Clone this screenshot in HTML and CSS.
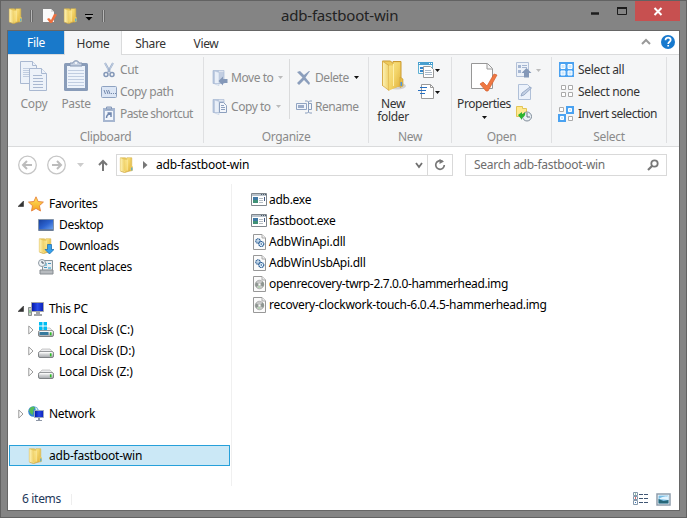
FILE: index.html
```html
<!DOCTYPE html>
<html lang="en">
<head>
<meta charset="utf-8">
<title>adb-fastboot-win</title>
<link rel="stylesheet" href="styles.css">
</head>
<body>
<svg class="defs" width="0" height="0">
  <defs>
    <linearGradient id="gold" x1="0" y1="0" x2="1" y2="1"><stop offset="0" stop-color="#f9e48c"/><stop offset=".5" stop-color="#f3d468"/><stop offset="1" stop-color="#dfb03c"/></linearGradient>
    <linearGradient id="pale" x1="0" x2="1"><stop offset="0" stop-color="#fdf3b8"/><stop offset="1" stop-color="#efd067"/></linearGradient>
    <linearGradient id="blue" x1="0" y1="0" x2="1" y2="1"><stop offset="0" stop-color="#173e9b"/><stop offset=".5" stop-color="#2c63cf"/><stop offset="1" stop-color="#75aaf1"/></linearGradient>
    <linearGradient id="metal" x1="0" y1="0" x2="0" y2="1"><stop offset="0" stop-color="#f6f6f6"/><stop offset="1" stop-color="#a5a8ac"/></linearGradient>
    <linearGradient id="starfill" x1="0" y1="0" x2="0" y2="1"><stop offset="0" stop-color="#ffe65e"/><stop offset="1" stop-color="#f5a01f"/></linearGradient>
    <linearGradient id="screen" x1="0" x2="1"><stop offset="0" stop-color="#0013a3"/><stop offset=".5" stop-color="#2849e8"/><stop offset="1" stop-color="#0a20b8"/></linearGradient>
    <symbol id="folder" viewBox="0 0 16 16">
      <path d="M1.300.800h5l1.500 1.300V.8h5v13H1.300z" fill="#e8c75d" stroke="#d9b44c" stroke-width=".6"/>
      <path d="M1.500 1l4 1.800v12.900l-4-1.500z" fill="url(#pale)"/>
      <path d="M5.500 2.800h2.700V1h3.300v12.500l-6 2.200z" fill="url(#gold)"/>
      <path d="M8.200 2.500v11" stroke="#fff2b0" stroke-width=".7"/>
      <path d="M11.500 8.500l2.300 1v4l-2.300.8z" fill="#edca5b"/>
      <path d="M12.800 10.500v3" stroke="#49a6dd" stroke-width="1.200"/><path d="M1.500 14.200l4 1.400 6-1.900" fill="none" stroke="#c79d3b" stroke-width=".6"/>
    </symbol>
    <symbol id="folder-muted" viewBox="0 0 16 16">
      <path d="M1 .5h6v14l-6-1z" fill="#b4c3dc"/><path d="M6 1.500h6v12H6z" fill="#c2cee2"/><path d="M2.500 1L7 2.500v13L2.500 14z" fill="#e9eff8" stroke="#b2c1d9" stroke-width=".5"/>
      <path d="M1 .5h11v13H1z" fill="none" stroke="#a8b9d4" stroke-width=".7"/>
    </symbol>
    <symbol id="drive" viewBox="0 0 16 16">
      <path d="M.8 9.500l3.200-3.500h8l3.200 3.500z" fill="#ececee" stroke="#aaa" stroke-width=".6"/>
      <rect x=".5" y="8.700" width="15" height="5.800" rx="1.500" fill="url(#metal)" stroke="#75787c" stroke-width=".9"/><path d="M1.500 9.700h13" stroke="#fff"/><path d="M12.700 10.300v3" stroke="#2dbe25" stroke-width="1.600"/>
    </symbol>
    <symbol id="exe" viewBox="0 0 16 13">
      <path d="M.5.500h15v12H.5z" fill="#fff" stroke="#7f868c"/><path d="M1 2h14" stroke="#b9c2ca" stroke-width="2"/><path d="M10 1.500h1m1 0h1m1 0h1" stroke="#495969"/>
      <path d="M2 4h5v6H2z" fill="#3f78a4"/><path d="M2 7h5v3H2z" fill="#409177"/><path d="M8 5.500h4m-4 2h4m-4 2h4" stroke="#b5bdc4"/><path d="M13.500 4v4" stroke="#465a82"/>
    </symbol>
    <symbol id="file" viewBox="0 0 13 16"><path d="M.5.500h8.500l3.500 3.500v11.500H.5z" fill="#fbfbfb" stroke="#989898"/><path d="M9 .5V4h3.500" fill="#eee" stroke="#aaa"/></symbol>
    <symbol id="dll" viewBox="0 0 13 16"><use href="#file" width="13" height="16"/><g fill="#eaf6ff" stroke="#285b91" stroke-width="1.200"><circle cx="5" cy="7" r="2.200" stroke-dasharray="1.300 .4"/><circle cx="8.300" cy="10" r="2.500" stroke-dasharray="1.400 .4"/></g><circle cx="5" cy="7" r=".6" fill="#285b91"/><circle cx="8.300" cy="10" r=".8" fill="#285b91"/></symbol>
    <symbol id="img" viewBox="0 0 13 16"><use href="#file" width="13" height="16"/><circle cx="6.500" cy="8.500" r="4.300" fill="#c8c9c9" stroke="#999" stroke-width=".6"/><path d="M6.500 8.500L3 6.300A4 4 0 0 0 3.200 11zM6.500 8.500l3.200-3A4 4 0 0 1 10 10.800z" fill="#8d9590"/><path d="M6.500 8.500l-2 3.300h3z" fill="#b1d5ae"/><circle cx="6.500" cy="8.500" r="1.300" fill="#fff" stroke="#aaa" stroke-width=".5"/></symbol>
    <symbol id="closed" viewBox="0 0 6 10"><path d="M.8 1l4.200 4-4.200 4z" fill="#fff" stroke="#999"/></symbol>
    <symbol id="opened" viewBox="0 0 6 6"><path d="M5.500 0v5.500H0z" fill="#333" stroke="#222" stroke-width=".5"/></symbol>
    <symbol id="down" viewBox="0 0 5 3"><path d="M0 0h5L2.500 3z" fill="currentColor"/></symbol>
    <symbol id="doc-check" viewBox="0 0 28 31"><path d="M1.500 1.500h16l5 5v20h-21z" fill="#fff" stroke="#979797"/><path d="M17 2v5h5" fill="#f4f4f4" stroke="#999"/><path d="M10 22l3-2 4 4 7-12 3 1-9 16h-2z" fill="#ef7843" stroke="#d65e2c" stroke-width=".7"/></symbol>
  </defs>
</svg>
<div class="window">
  <header class="titlebar">
    <div class="quick">
      <svg class="i16"><use href="#folder"/></svg><i class="qsep"></i>
      <svg class="qcheck" width="16" height="16" viewBox="0 0 16 16"><path d="M1 1h8l3 3v10H1z" fill="#fafafa"/><path d="M9 1v3h3" fill="#ddd"/><path d="M5 11l2-1 2 2 3-6 3 .5L10 15H8z" fill="#ed7040"/></svg>
      <svg class="i16"><use href="#folder"/></svg>
      <svg class="qmore" width="8" height="7"><path d="M0 .5h8" stroke="#000"/><path d="M.5 3h7L4 6.500z"/><path d="M1 2h7" stroke="#ccc" stroke-width=".6"/></svg><i class="qsep"></i>
    </div>
    <h1>adb-fastboot-win</h1>
    <div class="controls">
      <svg class="wbtn" width="60" height="20"><path d="M16 12.500h8" stroke="#1c1c1c" stroke-width="2.500"/><path d="M42.500 6.500h9v7h-9z" fill="none" stroke="#1c1c1c"/><path d="M42 7h10" stroke="#1c1c1c" stroke-width="2"/></svg>
      <svg class="close" width="45" height="20"><path d="M19.500 7l7 7m0-7l-7 7" stroke="#fff" stroke-width="2"/></svg>
    </div>
  </header>
  <main class="client">
    <nav class="tabs">
      <span class="tab file">File</span><span class="tab home">Home</span><span class="tab share">Share</span><span class="tab view">View</span>
      <svg class="tabtools" width="37" height="23"><path d="M4 13l4-4 4 4" fill="none" stroke="#999" stroke-width="2"/><circle cx="30" cy="11" r="7" fill="#1779ce"/><path d="M27.500 9.200c0-3.500 5.200-3.200 5.200-.2 0 1.700-2.500 1.900-2.500 4m0 1v1.600" fill="none" stroke="#fff" stroke-width="1.700"/></svg>
    </nav>
    <section class="ribbon">
      <div class="group clipboard">
        <div class="tools">
          <div class="big copy"><svg width="30" height="34" viewBox="0 0 30 34"><g stroke="#a9b8d1" fill="#edf2f9"><path d="M1.500 2.500h12l4 4v18h-16z"/><path d="M4 9.500h9m-9 2h9m-9 2h9m-9 2h9m-9 2h9" stroke="#c1cde0"/><path d="M13.500 2.500v4h4"/><path d="M10.500 9.500h12l5 5v17h-17z"/><path d="M22.500 9.500v5h5"/><path d="M14 16.500h9m-9 3h10m-10 3h10m-10 3h10m-10 3h10"/></g></svg><span>Copy</span></div>
          <div class="big paste"><svg width="26" height="34" viewBox="0 0 26 34"><rect x="1" y="4" width="24" height="28" rx="1.500" fill="#899cb9"/><path d="M4 7h18v22H4z" fill="#edf3fb"/><path d="M5 11.500h16m-16 3h16m-16 3h16m-16 3h16m-16 3h16m-16 3h16" stroke="#c0cde1"/><path d="M7 7V4h3c0-3 6-3 6 0h3v3z" fill="#c4cfe0" stroke="#8395b2"/><circle cx="13" cy="4" r="1" fill="#fff"/></svg><span>Paste</span></div>
          <div class="stack">
            <span class="cmd"><svg width="16" height="16"><path d="M4 1l5 9m3-9L7 10" stroke="#9eb0cc" stroke-width="2"/><path d="M4 1l3 6m5-6L9 7" stroke="#c2cfe2"/><g fill="none" stroke="#8498b8" stroke-width="1.500"><circle cx="5" cy="12.500" r="2"/><circle cx="11" cy="12.500" r="2"/></g></svg>Cut</span>
            <span class="cmd"><svg width="16" height="16"><rect x=".5" y="2.500" width="15" height="11" rx="1" fill="#dce6f5" stroke="#8ea2c1"/><path d="M3 6l1.500 4M5.500 6L7 10M7.500 6L9 10" stroke="#7287aa"/><path d="M10 9.500h1m1 0h1m1 0h1" stroke="#7287aa"/></svg>Copy path</span>
            <span class="cmd tight"><svg width="16" height="16"><rect x="2" y="2" width="12" height="14" fill="#a6b6d0"/><path d="M4 5h8v9H4z" fill="#f2f6fc"/><path d="M5.500 3V1h5v2z" fill="#cbd5e4" stroke="#8498b8"/><path d="M5.500 12c0-3 1-4 4-4m-3-1h3.500v4" fill="none" stroke="#7188ae" stroke-width="1.500"/></svg>Paste shortcut</span>
          </div>
        </div><div class="caption">Clipboard</div>
      </div>
      <div class="group organize">
        <div class="tools">
          <div class="stack">
            <span class="cmd"><svg width="16" height="16"><use href="#folder-muted"/><path d="M6.500 11l4.500-4.500V9h4.500v4H11v2.500z" fill="#8498b8"/></svg>Move to<svg class="drop"><use href="#down"/></svg></span>
            <span class="cmd"><svg width="16" height="16"><use href="#folder-muted"/><path d="M7.500 3.500h4l3 3v7h-7z" fill="#f3f6fb" stroke="#8da0be"/><path d="M9 6.500h3m-3 2h4m-4 2h4" stroke="#8da0be"/></svg>Copy to<svg class="drop"><use href="#down"/></svg></span>
          </div>
          <div class="stack second">
            <span class="cmd"><svg width="16" height="16"><path d="M1 2l3-1 4 4 5-4h1L9.500 7.500 14 13l-1 2-5-5-5 5-2-2 5.500-5.500z" fill="#8b9ebc"/></svg>Delete<svg class="drop dark"><use href="#down"/></svg></span>
            <span class="cmd"><svg width="16" height="16"><path d="M.5 4.500h10v6H.5z" fill="#f0f4fb" stroke="#91a4c2"/><path d="M2 6h6v3H2z" fill="#9bacc8"/><path d="M9 2h2.500l1 1 1-1H16M12.500 3v10M9 14h2.500l1-1 1 1H16M13 4.500h2.500v6H13" fill="none" stroke="#8a9ebd"/></svg>Rename</span>
          </div>
        </div><div class="caption">Organize</div>
      </div>
      <div class="group new">
        <div class="tools">
          <div class="big newfolder"><svg width="30" height="34" viewBox="0 0 30 34"><ellipse cx="19" cy="27" rx="9" ry="3.500" fill="#d2d2d2"/><path d="M4.500 2h8l2.500 2.500V2.500h8v24l-8 2-10.500-2z" fill="#edca5c" stroke="#cb9a31"/><path d="M4.500 2.300L11 6.500v25l-6.500-5z" fill="url(#pale)" stroke="#d2a23b" stroke-width=".7"/><path d="M11 6.500h4.500V3.500h6.500V27l-11 4.500z" fill="url(#gold)"/><path d="M15.500 5v22" stroke="#fff0a8"/><path d="M22 18l3 2v7l-3 1.500z" fill="#e6bd49" stroke="#cb9a31" stroke-width=".6"/><path d="M23.300 23v4" stroke="#4c95dd" stroke-width="1.600"/></svg><span>New</span><span>folder</span></div>
          <div class="stack">
            <span class="cmd"><svg width="17" height="18"><path d="M1.500 1.500h14v11h-14z" fill="#f2f9fd" stroke="#5db0d3"/><path d="M1 2.500h15" stroke="#489fcf" stroke-width="3"/><path d="M2 2.500h1m9 0h1m1 0h1" stroke="#fff"/><path d="M3 7h3m-3 3h3" stroke="#3486cc" stroke-width="2"/><path d="M6.500 5.500h7l3 3v8h-10z" fill="#fff" stroke="#999"/><path d="M8 9.500h6m-6 2h7m-7 2h7" stroke="#aab9c8"/></svg><svg class="drop dark"><use href="#down"/></svg></span>
            <span class="cmd"><svg width="17" height="18"><path d="M4.500 1.500h9l3 3v11h-12z" fill="#fff" stroke="#999"/><path d="M13.500 1.500v3h3" fill="none" stroke="#999"/><path d="M3 4.500h7m-9 3h8m-6 3h5" stroke="#276fc0"/></svg><svg class="drop dark"><use href="#down"/></svg></span>
          </div>
        </div><div class="caption">New</div>
      </div>
      <div class="group open">
        <div class="tools">
          <div class="big properties"><svg width="28" height="31"><use href="#doc-check"/></svg><span>Properties</span><svg class="drop dark"><use href="#down"/></svg></div>
          <div class="stack">
            <span class="cmd"><svg width="16" height="16"><path d="M.5.500h12v14H.5z" fill="#edf2f9" stroke="#b3c1d8"/><path d="M2 3h3v3H2zm0 5h3v3H2z" fill="#a5b6d2"/><path d="M6 3.500h5m-5 2h5" stroke="#a5b6d2"/><path d="M10.500 6l5 5H13v4.500H8V11H5.500z" fill="#8498b8"/></svg><svg class="drop"><use href="#down"/></svg></span>
            <span class="cmd"><svg width="16" height="16"><path d="M2.500.500h9l3 3v12h-12z" fill="#ecf2fb" stroke="#b0c0d8"/><path d="M5 12l1-3 8-6 1.500 1L8 11z" fill="#c2cfe3" stroke="#8ca0bf" stroke-width=".8"/></svg></span>
            <span class="cmd"><svg width="16" height="16"><path d="M.5.500h6v2h4v8H.5z" fill="#ffe98e" stroke="#e2c457"/><circle cx="11" cy="10.500" r="4.500" fill="#eaf0f6" stroke="#7e8a97"/><path d="M11 7v4h3" fill="none" stroke="#65717e"/><path d="M1 8l4-3v2c3-1 3-2 3-2 1 3-1 5-3 6v2z" fill="#2bb32f" transform="translate(1 1)"/></svg></span>
          </div>
        </div><div class="caption">Open</div>
      </div>
      <div class="group select">
        <div class="tools"><div class="stack">
          <span class="cmd"><svg width="16" height="16"><path d="M1 0h15v15H1z" fill="#4aa2f1"/><path d="M3 2.500h4v4H3zm7 0h4v4h-4zm-7 6.500h4v4H3zm7 0h4v4h-4z" fill="#cce9ff" stroke="#fff"/></svg>Select all</span>
          <span class="cmd"><svg width="16" height="16"><path d="M3.500 1.500h4v4h-4zm7 0h4v4h-4zm-7 7h4v4h-4zm7 0h4v4h-4z" fill="#fff" stroke="#aaa"/></svg>Select none</span>
          <span class="cmd tight"><svg width="16" height="16"><path d="M8 0h8v8H8zM0 8h8v8H0z" fill="#4aa2f1"/><path d="M10.500 2.500h3v3h-3zm-8 8h3v3h-3z" fill="#cce9ff" stroke="#fff"/><path d="M1.500 1.500h4v4h-4zm9 9h4v4h-4z" fill="#fff" stroke="#aaa"/></svg>Invert selection</span>
        </div></div><div class="caption">Select</div>
      </div>
    </section>
    <section class="address">
      <svg class="arrows" width="96" height="22"><g fill="#fff" stroke="#c6c6c6" stroke-width="1.300"><circle cx="9.500" cy="11" r="8.800"/><circle cx="38.500" cy="11" r="8.800"/></g><path d="M14 11H5m4-4l-4 4 4 4M34 11h9m-4-4l4 4-4 4" fill="none" stroke="#bcbcbc" stroke-width="2"/><path d="M59 9h7l-3.500 4z" fill="#ccc"/><path d="M85 17V7m-4 4l4-4 4 4" fill="none" stroke="#777" stroke-width="2"/></svg>
      <div class="path"><svg class="i16"><use href="#folder"/></svg><svg class="crumb" width="5" height="8"><path d="M0 0l4.500 4L0 8z" fill="#777"/></svg><span class="wide">adb-fastboot-win</span><svg class="chev" width="8" height="7"><path d="M1 1l3 4 3-4" fill="none" stroke="#707070" stroke-width="1.800"/></svg><div class="refresh"><svg width="12" height="12"><path d="M8.500 2.500A4.300 4.300 0 1 0 10.300 6" fill="none" stroke="#777" stroke-width="1.700"/><path d="M5.500 0v5L10 2.500z" fill="#777"/></svg></div></div>
      <div class="search"><span>Search adb-fastboot-win</span><svg width="12" height="12"><circle cx="7.500" cy="4.500" r="3.200" fill="none" stroke="#777" stroke-width="1.800"/><path d="M5 7l-4 4" stroke="#777" stroke-width="2.200"/></svg></div>
    </section>
    <section class="content">
      <aside class="tree">
        <div class="node top"><svg class="open-mark"><use href="#opened"/></svg><svg width="16" height="16"><path d="M8 .8l2.100 4.700 5.300.6-4 3.600 1.100 5.300L8 12.400 3.500 15l1-5.300-4-3.600 5.400-.6z" fill="url(#starfill)" stroke="#e5813c" stroke-width=".9"/></svg><span>Favorites</span></div>
        <div class="node sub"><i></i><svg width="16" height="16"><path d="M.5 2.500h15v11H.5z" fill="url(#blue)" stroke="#8293a8"/><path d="M1 13h14" stroke="#647691" stroke-width="1.500"/></svg><span>Desktop</span></div>
        <div class="node sub"><i></i><svg width="16" height="16"><use href="#folder"/><path d="M9.500 6.500h4v5H16L11.500 16 7 11.500h2.500z" fill="#36a1ed" stroke="#1769ae" stroke-width=".7"/></svg><span>Downloads</span></div>
        <div class="node sub"><i></i><svg width="16" height="16"><path d="M4.500 1.500h10v10h-10z" fill="#e9edf0" stroke="#8a959b"/><path d="M6 4h3v3H6zm4 4h3v2h-3z" fill="#82c5df"/><path d="M10 4.500h3m-7 4h3" stroke="#4a94bc"/><path d="M2 11h13v4H2z" fill="#b7bbbf" stroke="#858b90"/><circle cx="4" cy="4" r="3.500" fill="#edf2f5" stroke="#8f9aa3"/><path d="M4 2v2h2" fill="none" stroke="#456"/></svg><span>Recent places</span></div>
        <div class="gap"></div>
        <div class="node top"><svg class="open-mark"><use href="#opened"/></svg><svg width="16" height="16"><path d="M.5 6.500h3v8h-3z" fill="#c5c9c7" stroke="#8b908d"/><path d="M2 9v3" stroke="#57b85d"/><path d="M3.500 1.500h12v9h-12z" fill="url(#screen)" stroke="#a3a5a9"/><path d="M8 11h4v2h2v2H6v-2h2z" fill="#a2a5a8"/></svg><span>This PC</span></div>
        <div class="node sub disk"><svg class="mark"><use href="#closed"/></svg><svg width="16" height="16"><use href="#drive"/><path d="M1.500 11.500h9" stroke="#377a9e" stroke-width="3"/><path d="M1 0h3.500v3.500H1zm4.500 0H9v3.500H5.500zM1 4.500h3.500V8H1zm4.500 0H9V8H5.500z" fill="#00bcf2"/></svg><span>Local Disk (C:)</span></div>
        <div class="node sub disk"><svg class="mark"><use href="#closed"/></svg><svg width="16" height="16"><use href="#drive"/></svg><span>Local Disk (D:)</span></div>
        <div class="node sub disk"><svg class="mark"><use href="#closed"/></svg><svg width="16" height="16"><use href="#drive"/></svg><span>Local Disk (Z:)</span></div>
        <div class="gap"></div>
        <div class="node top"><svg class="mark"><use href="#closed"/></svg><svg width="16" height="16"><circle cx="5.500" cy="5.500" r="5.300" fill="#3487d0"/><path d="M3 1c4-1 5 1 2 3 2 2-1 2 0 5-2 0-4-4-4-5z" fill="#55bd57"/><path d="M7 1l3 2-2 2z" fill="#d9f5ed"/><path d="M6.500 4.500h9v7h-9z" fill="url(#screen)" stroke="#9daabd"/><path d="M10 12h2v2h2v1H8v-1h2z" fill="#8f98a7"/></svg><span>Network</span></div>
        <div class="gap"></div>
        <div class="node top selected"><i></i><svg class="i16"><use href="#folder"/></svg><span class="wide">adb-fastboot-win</span></div>
      </aside>
      <div class="files">
        <div class="item"><svg class="exe"><use href="#exe"/></svg><span>adb.exe</span></div>
        <div class="item"><svg class="exe"><use href="#exe"/></svg><span>fastboot.exe</span></div>
        <div class="item"><svg class="doc"><use href="#dll"/></svg><span class="wide">AdbWinApi.dll</span></div>
        <div class="item"><svg class="doc"><use href="#dll"/></svg><span>AdbWinUsbApi.dll</span></div>
        <div class="item"><svg class="doc"><use href="#img"/></svg><span class="release">openrecovery-twrp-2.7.0.0-hammerhead.img</span></div>
        <div class="item"><svg class="doc"><use href="#img"/></svg><span>recovery-clockwork-touch-6.0.4.5-hammerhead.img</span></div>
      </div>
    </section>
    <footer class="status"><span>6 items</span><i></i><svg width="38" height="14"><path d="M.5.500h4v3h-4zm0 4h4v3h-4zm0 4h4v4h-4z" fill="#fff" stroke="#8498aa"/><path d="M2 2h1" stroke="#32845a"/><path d="M2 6h1" stroke="#d03131" stroke-width="1.500"/><path d="M2 10.500h1" stroke="#3875c3"/><path d="M6 2.500h4m1 0h4m-9 4h4m1 0h4m-9 4h4m1 0h4" stroke="#405674"/><path d="M24 2h13v11H24z" fill="#fff" stroke="#8e9dac" stroke-width="1.500"/><path d="M25.500 3.500h10v8h-10z" fill="#77bde5"/><path d="M26 7c3-3 7-2 9.500-3v4z" fill="#e4f5ff"/><path d="M25.500 7l5 2 5-1v3.500h-10z" fill="#266678"/></svg></footer>
  </main>
</div>
</body>
</html>
```
FILE: styles.css
```css
* { box-sizing: border-box; }
body { margin: 0; font: 12px/16px "Noto Sans", "Open Sans", sans-serif; letter-spacing: -.32px; color: #000; }
svg { display: block; flex: none; }
.defs { position: absolute; }
.i16 { width: 16px; height: 16px; }
.wide { letter-spacing: -.2px; }
.window { width: 687px; height: 518px; border: 1px solid #626262; background: #848484; padding: 0 6px 6px; }
.titlebar { height: 29px; display: grid; grid-template-columns: 280px 1fr auto; margin: 0 -6px; }
.quick { display: flex; align-items: center; padding-left: 7px; height: 29px; }
.qsep { width: 3px; height: 12px; border: solid #686868; border-width: 0 1px; background: #b7b7b7; margin: 0 8px 0 6px; }
.qcheck { margin-right: 5px; margin-left: 1px; }
.qmore { margin: 3px 3px 0 6px; }
h1 { margin: 5px 0 0; font-size: 15px; line-height: 19px; font-weight: 400; letter-spacing: -.2px; color: #222; white-space: nowrap; }
.controls { display: flex; justify-content: flex-end; padding-right: 6px; }
.close { background: #c75050; }
.client { height: 481px; border: 1px solid #666; background: #fff; display: flex; flex-direction: column; }
.tabs { height: 24px; display: flex; border-bottom: 1px solid #dadbdc; color: #333; }
.tab { text-align: center; padding-top: 5px; }
.file { width: 56px; background: #1979ca; color: #fff; padding-top: 4px; }
.home { width: 58px; height: 24px; border: solid #dadbdc; border-width: 0 1px; background: #f5f6f7; }
.share { width: 57px; }
.view { width: 54px; }
.tabtools { margin-left: auto; margin-right: 4px; }
.ribbon { height: 92px; background: #f5f6f7; border-bottom: 1px solid #dadbdc; display: grid; grid-template-columns: 196px 165px 83px 100px 115px; color: #333; padding-top: 2px; }
.group { height: 86px; border-right: 1px solid #dfe0e2; }
.tools { display: flex; height: 71px; padding-top: 2px; }
.caption { color: #8a8a8a; text-align: center; line-height: 18px; }
.clipboard, .organize { color: #8a8a8a; }
.big { display: flex; flex-direction: column; align-items: center; line-height: 13px; text-align: center; }
.big > svg + span { margin-top: 4px; }
.cmd { display: flex; align-items: center; height: 22px; white-space: nowrap; gap: 4px; }
.drop { width: 5px; height: 3px; color: #bbb; margin-left: 1px; }
.drop.dark { color: #111; }
.copy { width: 42px; margin-left: 5px; }
.paste { width: 42px; margin-right: 4px; }
.clipboard .cmd { gap: 3px; letter-spacing: -.4px; }
.clipboard .tight { letter-spacing: -.6px; }
.organize .stack { padding: 4px 0 0 8px; width: 86px; flex: none; }
.organize .cmd { height: 29px; gap: 3px; letter-spacing: -.45px; }
.organize .drop { margin-left: 2px; }
.organize .second { height: 60px; border-left: 1px solid #dadbdc; padding-left: 6px; margin-left: -1px; }
.newfolder { width: 48px; }
.new .cmd { gap: 0; }
.properties { width: 64px; letter-spacing: -.45px; }
.properties svg:first-child { margin-top: 3px; }
.properties .drop { margin: 6px 0 0; }
.open .cmd { gap: 3px; }
.select .stack { padding-left: 6px; }
.select .tight { letter-spacing: -.5px; }
.address { height: 37px; padding: 7px 12px 8px 10px; display: flex; }
.path { width: 337px; margin-left: 2px; border: 1px solid #d9d9d9; display: flex; align-items: center; padding-left: 2px; }
.crumb { margin: 0 8px 0 8px; }
.chev { margin-left: auto; margin-right: 4px; }
.refresh { width: 25px; height: 20px; border-left: 1px solid #d9d9d9; display: grid; place-items: center; }
.search { width: 202px; margin-left: 12px; border: 1px solid #d9d9d9; display: flex; align-items: center; justify-content: space-between; padding: 0 7px 0 8px; color: #6d6d6d; letter-spacing: -.28px; }
.content { height: 302px; display: flex; }
.tree { width: 224px; padding: 9px 1px 0; border-right: 1px solid #f0f0f0; }
.node { height: 21px; display: flex; align-items: center; padding-left: 9px; white-space: nowrap; }
.node > :first-child { width: 6px; margin-right: 4px; }
.node > span { margin-left: 5px; }
.sub { padding-left: 19px; }
.disk { letter-spacing: -.2px; }
.mark { height: 10px; }
.open-mark { height: 6px; }
.gap { height: 21px; }
.selected { background: #cbe8f6; border: 1px solid #26a0da; padding-left: 8px; width: 221px; }
.files { padding: 5px 0 0 19px; letter-spacing: -.28px; }
.item { height: 21px; display: flex; align-items: center; white-space: nowrap; }
.release { letter-spacing: -.36px; }
.exe { width: 16px; height: 13px; margin-right: 2px; }
.doc { width: 13px; height: 16px; margin: 0 3px 0 2px; }
.status { flex: 1; display: flex; align-items: center; padding: 2px 8px 0 14px; color: #1e395b; }
.status i { width: 1px; height: 11px; background: #eee; margin-left: 10px; }
.status svg { margin-left: auto; }
```
